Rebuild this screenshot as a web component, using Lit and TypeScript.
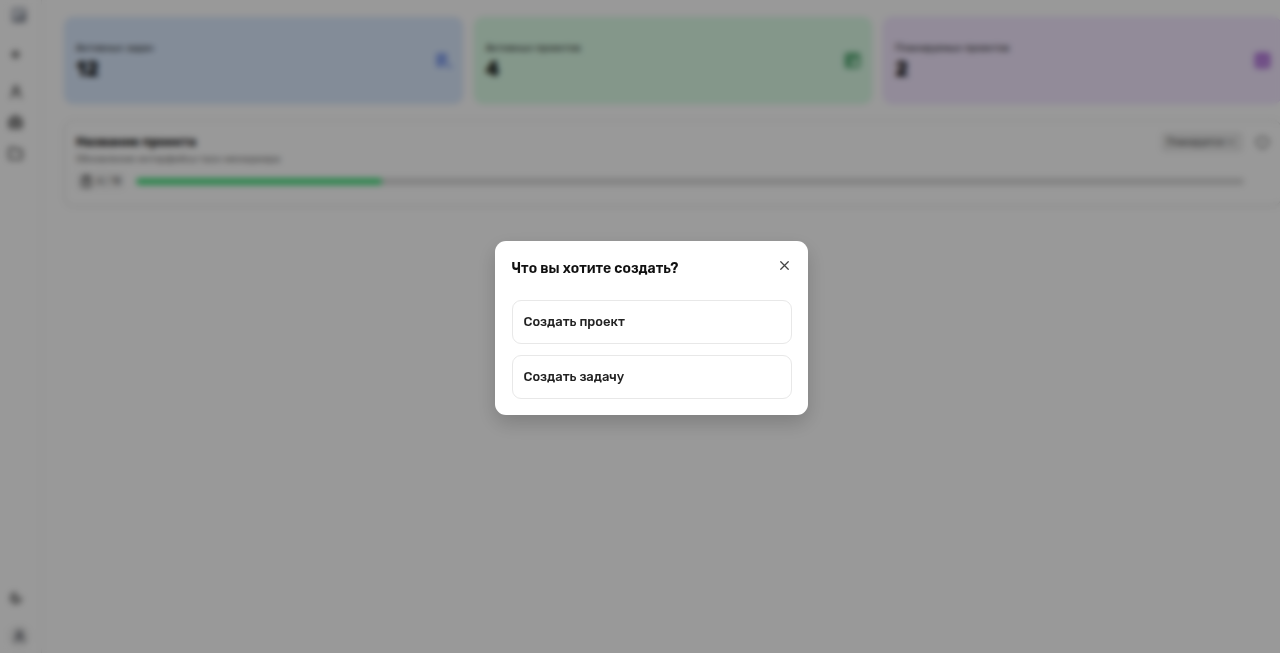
import { LitElement, html, css, svg } from "lit";
import { customElement, property, state } from "lit/decorators.js";

const icon = (size: number, body: unknown) => html`
  <svg width=${size} height=${size} viewBox="0 0 24 24" fill="none" stroke="currentColor"
    stroke-width="2.4" stroke-linecap="round" stroke-linejoin="round" aria-hidden="true">${body}</svg>`;

const shapes = {
  logo: svg`<rect x="2" y="2" width="20" height="20" rx="3" fill="#d5d9e0" stroke="#a3a8b2"/><path d="M2 16l6 2 5-3 4-5 5-2v13a2 2 0 0 1-2 2H4a2 2 0 0 1-2-2z" fill="#8d929d" stroke="none"/>`,
  plus: svg`<path d="M12 4v16M4 12h16" stroke-width="5"/>`,
  user: svg`<circle cx="12" cy="7" r="4.5" stroke-width="3"/><path d="M4 22c0-5 3-8 8-8s8 3 8 8" stroke-width="3"/>`,
  briefcase: svg`<path d="M7 6V4a2 2 0 0 1 2-2h6a2 2 0 0 1 2 2v2"/><rect x="2" y="6" width="20" height="15" rx="3" fill="#b4b4b4"/><path d="M2 13h20M12 11v4"/>`,
  folder: svg`<path d="M2 5a2 2 0 0 1 2-2h6l3 3h7a2 2 0 0 1 2 2v11a2 2 0 0 1-2 2H4a2 2 0 0 1-2-2z" stroke-width="3"/>`,
  moon: svg`<path d="M11 3a7 7 0 0 0 10 9 9 9 0 1 1-10-9z" fill="#b4b4b4"/>`,
  tasks: svg`<path d="M3 3h13v9h-5v8H3z" fill="currentColor"/><path d="M15 16l3 3 4 2" stroke-width="4"/>`,
  board: svg`<path d="M5 3h14a2 2 0 0 1 2 2v14a2 2 0 0 1-2 2H5a2 2 0 0 1-2-2V5a2 2 0 0 1 2-2z" stroke-width="4"/><path d="M3 3h18v6H3zM3 8h7v13H3z" fill="currentColor"/>`,
  calendar: svg`<rect x="2" y="2" width="20" height="20" rx="3" fill="currentColor"/><path d="M8 11h1M15 11h1M8 16h1M15 16h1" stroke="#f3e8ff"/>`,
  clipboard: svg`<rect x="4" y="4" width="16" height="18" rx="2"/><path d="M8 2h8v4H8zM9 11h6M9 16h6"/>`,
  star: svg`<path d="M12 2l4 3 5 1v6l-1 5-5 2-3 3-3-3-5-2-1-5V6l5-1z"/>`,
  chevron: svg`<path d="M4 8l8 8 8-8" stroke-width="4"/>`,
  close: svg`<path d="M6 6l12 12M18 6L6 18" stroke-width="2"/>`,
};

const reset = css`
  * { box-sizing: border-box; }
  h2, h3, p { margin: 0; }
  svg { display: block; flex: none; }
  button { font: inherit; color: inherit; background: none; border: 0; padding: 0; cursor: pointer; }
`;

@customElement("side-nav")
class SideNav extends LitElement {
  static styles = [reset, css`
    :host { display: flex; flex: none; width: 42px; border-right: 1px solid #ebebeb; color: #555; }
    .nav { display: flex; flex-direction: column; flex: 1; padding: 7px 8px 6px; }
    .logo { padding-left: 3px; }
    .group { display: flex; flex-direction: column; gap: 16px; }
    .add { margin: 24px 0 22px; }
    .item { display: grid; place-items: center; width: 15px; height: 15px; }
    .bottom { margin-top: auto; display: flex; flex-direction: column; gap: 20px; }
    .avatar { display: grid; place-items: center; width: 22px; height: 22px; border-radius: 50%; background: #efefef; color: #4b4e58; }
  `];
  render() {
    return html`<nav class="nav">
      <div class="logo">${icon(16, shapes.logo)}</div>
      <button class="item add" aria-label="Создать">${icon(11, shapes.plus)}</button>
      <div class="group">
        <button class="item" aria-label="Профиль">${icon(14, shapes.user)}</button>
        <button class="item" aria-label="Проекты">${icon(15, shapes.briefcase)}</button>
        <button class="item" aria-label="Файлы">${icon(15, shapes.folder)}</button>
      </div>
      <div class="bottom">
        <button class="item" aria-label="Тема">${icon(14, shapes.moon)}</button>
        <button class="avatar" aria-label="Аккаунт">${icon(13, shapes.user)}</button>
      </div>
    </nav>`;
  }
}

@customElement("stat-card")
class StatCard extends LitElement {
  @property() label = "";
  @property() value = "";
  @property() tone = "blue";
  static styles = [reset, css`
    .card { display: flex; align-items: center; justify-content: space-between; height: 87px; padding: 0 10px 0 11px; border-radius: 9px; }
    .blue { background: #dbeafe; border: 1px solid #cfe0fb; }
    .green { background: #dcfce7; border: 1px solid #cdf5db; }
    .purple { background: #f3e8ff; border: 1px solid #ebdcfc; }
    .label { font-size: 10px; line-height: 16px; font-weight: 400; color: #111; }
    .value { font-size: 20px; line-height: 26px; font-weight: 700; color: #000; }
    .blue .icon { color: #86a2ee; }
    .green .icon { color: #5cae7a; }
    .purple .icon { color: #b375dc; }
  `];
  render() {
    const art = { blue: shapes.tasks, green: shapes.board, purple: shapes.calendar }[this.tone];
    return html`<div class="card ${this.tone}">
      <div><p class="label">${this.label}</p><p class="value">${this.value}</p></div>
      <div class="icon">${icon(17, art)}</div>
    </div>`;
  }
}

@customElement("project-card")
class ProjectCard extends LitElement {
  @property({ type: Number }) done = 4;
  @property({ type: Number }) total = 18;
  static styles = [reset, css`
    .card { display: flex; flex-direction: column; height: 86px; padding: 11px; border: 1px solid #e4e4e4; border-radius: 9px; box-shadow: 0 1px 3px rgba(0, 0, 0, 0.08); }
    .top { display: flex; justify-content: space-between; }
    .title { font-size: 13px; line-height: 20px; font-weight: 600; color: #000; }
    .note { font-size: 10px; line-height: 14px; color: #666; }
    .actions { display: flex; align-items: center; gap: 12px; height: 20px; color: #777; }
    .status { position: relative; display: flex; align-items: center; border-radius: 4px; background: #ebebeb; }
    .status select { appearance: none; width: 82px; height: 20px; padding: 0 16px 0 6px; border: 0; background: none; font: inherit; font-size: 9px; font-weight: 400; color: #333; }
    .status svg { position: absolute; right: 8px; pointer-events: none; }
    .progress { display: flex; align-items: center; gap: 11px; margin-top: 6px; padding-right: 26px; }
    .count { display: flex; align-items: center; justify-content: center; gap: 4px; width: 49px; height: 18px; border-radius: 5px; background: #f5f5f5; font-size: 9px; color: #444; }
    .track { flex: 1; height: 7px; border-radius: 4px; background: #d8d8d8; overflow: hidden; }
    .fill { height: 100%; border-radius: 4px; background: #4ade80; }
  `];
  render() {
    return html`<article class="card">
      <div class="top">
        <div><h3 class="title">Название проекта</h3><p class="note">Обновление интерфейса таск-менеджера</p></div>
        <div class="actions">
          <label class="status"><select aria-label="Статус проекта"><option>Планируется</option></select>${icon(8, shapes.chevron)}</label>
          <button aria-label="В избранное">${icon(15, shapes.star)}</button>
        </div>
      </div>
      <div class="progress">
        <div class="count">${icon(13, shapes.clipboard)}<span>${this.done} / ${this.total}</span></div>
        <div class="track"><div class="fill" style="width:${(this.done / this.total) * 100}%"></div></div>
      </div>
    </article>`;
  }
}

@customElement("create-dialog")
class CreateDialog extends LitElement {
  static styles = [reset, css`
    :host { position: fixed; inset: 0; display: flex; align-items: center; justify-content: center; padding: 3px 0 0 22px; background: rgba(0, 0, 0, 0.4); backdrop-filter: blur(3px); }
    .dialog { width: 313px; max-width: 100%; padding: 17px 16px 16px 17px; border-radius: 11px; background: #fff; box-shadow: 0 8px 20px rgba(0, 0, 0, 0.18); }
    .head { display: flex; align-items: flex-start; justify-content: space-between; margin-bottom: 20px; }
    .title { font-size: 14px; line-height: 22px; font-weight: 600; color: #111; }
    .close { color: #444; }
    .options { display: grid; gap: 11px; }
    .option { height: 44px; padding: 0 11px; border: 1px solid #e8e8e8; border-radius: 9px; text-align: left; font-size: 13px; line-height: 20px; font-weight: 500; color: #222; }
  `];
  render() {
    return html`<section class="dialog" role="dialog" aria-modal="true" aria-labelledby="heading">
      <header class="head">
        <h2 class="title" id="heading">Что вы хотите создать?</h2>
        <button class="close" aria-label="Закрыть" @click=${() => this.dispatchEvent(new Event("close"))}>${icon(15, shapes.close)}</button>
      </header>
      <div class="options">
        <button class="option">Создать проект</button>
        <button class="option">Создать задачу</button>
      </div>
    </section>`;
  }
}

@customElement("app-root")
class AppRoot extends LitElement {
  @state() private open = true;
  static styles = [reset, css`
    :host { display: flex; height: 100vh; overflow: hidden; background: #fff; font-family: Rubik, Inter, "Noto Sans", sans-serif; }
    .main { flex: 1; min-width: 0; display: flex; flex-direction: column; gap: 16px; margin-right: -2px; padding: 17px 0 17px 22px; }
    .stats { display: grid; grid-template-columns: repeat(3, 1fr); gap: 11px; }
  `];
  render() {
    return html`
      <side-nav></side-nav>
      <main class="main">
        <div class="stats">
          <stat-card label="Активных задач" value="12" tone="blue"></stat-card>
          <stat-card label="Активных проектов" value="4" tone="green"></stat-card>
          <stat-card label="Планируемых проектов" value="2" tone="purple"></stat-card>
        </div>
        <project-card></project-card>
      </main>
      ${this.open ? html`<create-dialog @close=${() => (this.open = false)}></create-dialog>` : null}`;
  }
}
